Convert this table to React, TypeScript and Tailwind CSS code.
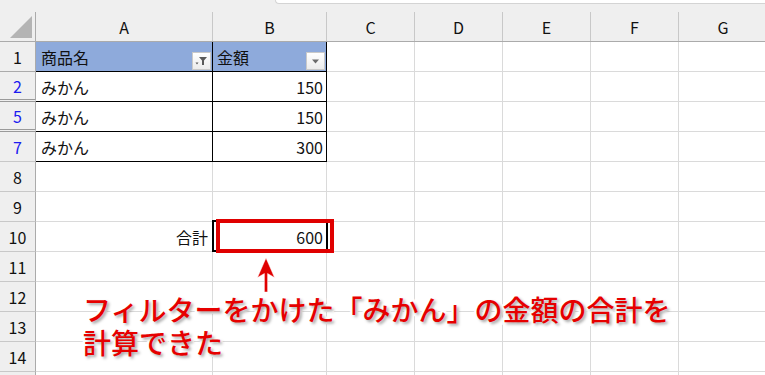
import type { ReactNode } from 'react';

const font = { fontFamily: '"Noto Sans CJK JP", "Noto Sans", sans-serif' };

type Row = {
  n: number;
  label?: boolean;
  blue?: boolean;
  hiddenBelow?: boolean;
  a?: ReactNode;
  b?: ReactNode;
  table?: boolean;
};

const rows: Row[] = [
  { n: 2, blue: true, hiddenBelow: true, a: 'みかん', b: '150', table: true },
  { n: 5, blue: true, hiddenBelow: true, a: 'みかん', b: '150', table: true },
  { n: 7, blue: true, a: 'みかん', b: '300', table: true },
  { n: 8 },
  { n: 9 },
  { n: 10, a: '合計', b: '600' },
  { n: 11 },
  { n: 12 },
  { n: 13 },
  { n: 14 },
  // only the top edge of row 15 is on screen
  { n: 15, label: false },
];

function FilterButton({ active }: { active?: boolean }) {
  return (
    <div className="w-[19px] h-[18px] mb-[1px] border border-[#c9c9c9] bg-gradient-to-b from-white to-[#ececec] flex items-center justify-center">
      {active ? (
        <svg width="13" height="10" viewBox="0 0 13 10">
          <path d="M4 1 H12 L9 4.5 V9 H7 V4.5 Z" fill="#5a5a5a" />
          <path d="M0.5 6.5 H3.5 L2 8.5 Z" fill="#5a5a5a" />
        </svg>
      ) : (
        <svg width="9" height="5" viewBox="0 0 9 5">
          <path d="M1 0.5 H8 L4.5 4.5 Z" fill="#6b6b6b" />
        </svg>
      )}
    </div>
  );
}

function GridCells() {
  return (
    <>
      <div className="w-[88px] shrink-0 border-r border-b border-[#dadada]" />
      <div className="w-[88px] shrink-0 border-r border-b border-[#dadada]" />
      <div className="w-[88px] shrink-0 border-r border-b border-[#dadada]" />
      <div className="w-[88px] shrink-0 border-r border-b border-[#dadada]" />
      <div className="flex-1 border-b border-[#dadada]" />
    </>
  );
}

export default function App() {
  return (
    <div className="relative w-[765px] h-[375px] overflow-hidden bg-white text-[16px] text-[#111]" style={font}>
      {/* strip under the formula bar */}
      <div className="h-[12px] bg-[#efefef] flex">
        <div className="ml-[275px] flex-1 h-[4px] bg-white border-b border-l border-[#d4d4d4] rounded-bl-[5px]" />
      </div>

      {/* column headers */}
      <div className="flex h-[30px] bg-[#efefef] border-b border-[#ababab]">
        <div className="w-[36px] shrink-0 border-r border-[#ababab] flex items-end justify-end pr-[3px] pb-[3px]">
          <div className="w-[22px] h-[22px] bg-[#b4b4b4] [clip-path:polygon(100%_0,100%_100%,0_100%)]" />
        </div>
        <div className="w-[177px] shrink-0 border-r border-[#c8c8c8] flex items-center justify-center">A</div>
        <div className="w-[114px] shrink-0 border-r border-[#c8c8c8] flex items-center justify-center">B</div>
        <div className="w-[88px] shrink-0 border-r border-[#c8c8c8] flex items-center justify-center">C</div>
        <div className="w-[88px] shrink-0 border-r border-[#c8c8c8] flex items-center justify-center">D</div>
        <div className="w-[88px] shrink-0 border-r border-[#c8c8c8] flex items-center justify-center">E</div>
        <div className="w-[88px] shrink-0 border-r border-[#c8c8c8] flex items-center justify-center">F</div>
        <div className="w-[88px] shrink-0 flex items-center justify-center">G</div>
      </div>

      {/* table header row */}
      <div className="flex h-[30px]">
        <div className="w-[36px] shrink-0 bg-[#efefef] border-r border-b border-[#ababab] flex items-center justify-center">1</div>
        <div className="w-[177px] shrink-0 bg-[#8eaadb] border-r border-b border-black flex items-end justify-between pl-[5px] pr-[1px]">
          <span className="self-center">商品名</span>
          <FilterButton active />
        </div>
        <div className="w-[114px] shrink-0 bg-[#8eaadb] border-r border-b border-black flex items-end justify-between pl-[4px] pr-[1px]">
          <span className="self-center">金額</span>
          <FilterButton />
        </div>
        <GridCells />
      </div>

      {rows.map((r) => (
        <div key={r.n} className="flex h-[30px]">
          <div
            className={`w-[36px] shrink-0 bg-[#efefef] border-r border-[#ababab] flex items-center justify-center ${
              r.blue ? 'text-[#1c1cf0]' : ''
            } ${r.hiddenBelow ? 'border-b-[3px] border-double border-b-[#9a9a9a]' : 'border-b border-b-[#c8c8c8]'}`}
          >
            {r.label === false ? null : r.n}
          </div>
          <div
            className={`w-[177px] shrink-0 flex items-center ${
              r.table ? 'border-r border-b border-black justify-start pl-[5px]' : 'border-r border-b border-[#dadada] justify-end pr-[4px]'
            }`}
          >
            {r.a}
          </div>
          <div
            className={`w-[114px] shrink-0 flex items-center justify-end pr-[3px] ${
              r.table ? 'border-r border-b border-black' : 'border-r border-b border-[#dadada]'
            }`}
          >
            {r.b}
          </div>
          <GridCells />
        </div>
      ))}

      {/* active cell B10 */}
      <div className="absolute left-[212px] top-[220px] w-[116px] h-[32px] border-2 border-black" />
      {/* red highlight */}
      <div className="absolute left-[216px] top-[219px] w-[118px] h-[34px] border-[4px] border-[#e00000]" />

      {/* arrow */}
      <svg className="absolute left-[250px] top-[252px]" width="32" height="44" viewBox="250 252 32 44">
        <path
          d="M266 258 L274.5 277.5 L267.6 273.5 L267.6 292 L264.4 292 L264.4 273.5 L257.5 277.5 Z"
          fill="#e00000"
          stroke="#ffffff"
          strokeOpacity="0.6"
          strokeWidth="0.8"
        />
      </svg>

      {/* caption */}
      <div className="absolute left-[83px] top-[293px] text-[28px] leading-[33px] font-medium text-[#e60000] [paint-order:stroke_fill] [-webkit-text-stroke:5px_#ffffff] [text-shadow:2px_2px_3px_rgba(0,0,0,0.35)] whitespace-nowrap">
        <div>フィルターをかけた「みかん」の金額の合計を</div>
        <div>計算できた</div>
      </div>
    </div>
  );
}
